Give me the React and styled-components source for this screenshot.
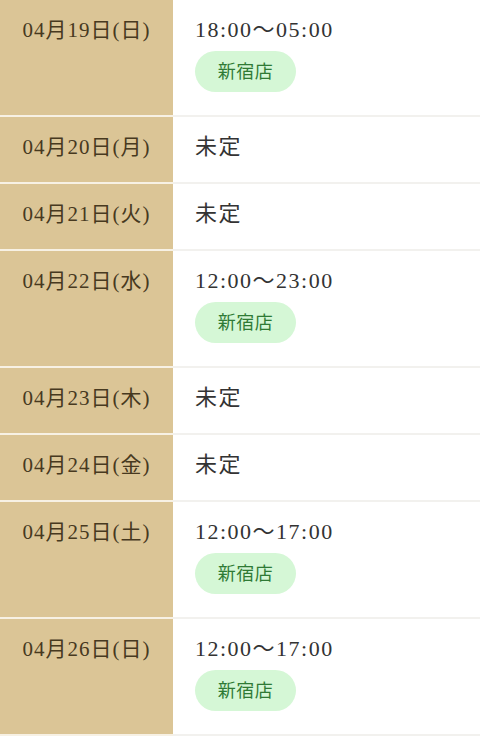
import React from "react"
import styled, { createGlobalStyle } from "styled-components"

const GlobalStyle = createGlobalStyle`
  html, body {
    margin: 0;
    padding: 0;
    background: #fff;
  }
  body {
    font-family: "Liberation Serif", "Noto Sans CJK JP", serif;
  }
`

const Schedule = styled.div`
  display: flex;
  flex-direction: column;
  width: 480px;
`

const Row = styled.div`
  display: flex;
  border-bottom: 2px solid #f2f1ee;
`

const DateCell = styled.div`
  width: 173px;
  flex-shrink: 0;
  background: #dbc596;
  color: #47391f;
  font-size: 21px;
  letter-spacing: 1px;
  line-height: 30px;
  text-align: center;
  padding: 15px 0 20px;
  box-sizing: border-box;
  box-shadow: 0 2px 0 #f7f1e4;
`

const InfoCell = styled.div`
  flex: 1;
  display: flex;
  flex-direction: column;
  align-items: flex-start;
  gap: 6px;
  padding: 15px 22px ${({ tall }) => (tall ? "23px" : "20px")};
  color: #333;
  font-size: 22px;
  letter-spacing: 1.5px;
  line-height: 30px;
`

const Badge = styled.span`
  display: inline-flex;
  align-items: center;
  justify-content: center;
  width: 101px;
  height: 41px;
  border-radius: 21px;
  background: #d5f7d6;
  color: #2f7a35;
  font-size: 18px;
  letter-spacing: 0.5px;
`

const days = [
  { date: "04月19日(日)", time: "18:00〜05:00", shop: "新宿店" },
  { date: "04月20日(月)" },
  { date: "04月21日(火)" },
  { date: "04月22日(水)", time: "12:00〜23:00", shop: "新宿店" },
  { date: "04月23日(木)" },
  { date: "04月24日(金)" },
  { date: "04月25日(土)", time: "12:00〜17:00", shop: "新宿店" },
  { date: "04月26日(日)", time: "12:00〜17:00", shop: "新宿店" },
]

export default function App() {
  return (
    <>
      <GlobalStyle />
      <Schedule>
        {days.map((d) => (
          <Row key={d.date}>
            <DateCell>{d.date}</DateCell>
            <InfoCell tall={!!d.time}>
              {d.time ? (
                <>
                  <span>{d.time}</span>
                  <Badge>{d.shop}</Badge>
                </>
              ) : (
                <span>未定</span>
              )}
            </InfoCell>
          </Row>
        ))}
      </Schedule>
    </>
  )
}
